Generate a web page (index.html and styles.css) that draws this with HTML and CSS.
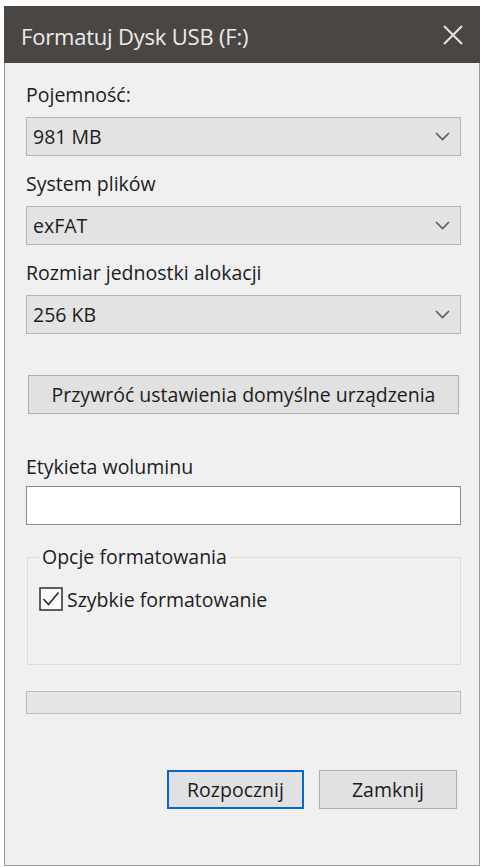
FILE: index.html
```html
<!DOCTYPE html>
<html lang="pl">
<head>
<meta charset="utf-8">
<title>Formatuj Dysk USB (F:)</title>
<link rel="stylesheet" href="styles.css">
</head>
<body>
<div class="window">
  <div class="titlebar">
    <span class="title">Formatuj Dysk USB (F:)</span>
    <svg class="close" width="20" height="20" viewBox="0 0 20 20"><path d="M1 1 L19 19 M19 1 L1 19" stroke="#e6e6e6" stroke-width="2" fill="none"/></svg>
  </div>
  <div class="content">
    <div class="label first">Pojemność:</div>
    <div class="combo"><span>981 MB</span><svg class="chev" width="15" height="9" viewBox="0 0 15 9"><polyline points="1,1 7.5,7.5 14,1" stroke="#5a5a5a" stroke-width="1.6" fill="none"/></svg></div>
    <div class="label">System plików</div>
    <div class="combo"><span>exFAT</span><svg class="chev" width="15" height="9" viewBox="0 0 15 9"><polyline points="1,1 7.5,7.5 14,1" stroke="#5a5a5a" stroke-width="1.6" fill="none"/></svg></div>
    <div class="label">Rozmiar jednostki alokacji</div>
    <div class="combo"><span>256 KB</span><svg class="chev" width="15" height="9" viewBox="0 0 15 9"><polyline points="1,1 7.5,7.5 14,1" stroke="#5a5a5a" stroke-width="1.6" fill="none"/></svg></div>
    <button class="btn restore">Przywróć ustawienia domyślne urządzenia</button>
    <div class="label vol">Etykieta woluminu</div>
    <div class="textbox"></div>
    <fieldset class="group">
      <legend>Opcje formatowania</legend>
      <div class="check">
        <svg class="box" width="24" height="24" viewBox="0 0 24 24"><rect x="1" y="1" width="22" height="22" fill="#fafafa" stroke="#3a3a3a" stroke-width="1.6"/><polyline points="4.5,12 9.5,17.5 19.5,5.5" stroke="#2a2a2a" stroke-width="1.6" fill="none"/></svg>
        <span>Szybkie formatowanie</span>
      </div>
    </fieldset>
    <div class="progress"></div>
    <div class="actions">
      <button class="btn action primary">Rozpocznij</button>
      <button class="btn action">Zamknij</button>
    </div>
  </div>
</div>
</body>
</html>
```
FILE: styles.css
```css
html, body {
  margin: 0;
  padding: 0;
  background: #ffffff;
}
body {
  font-family: "Open Sans", "Noto Sans", "DejaVu Sans", sans-serif;
  color: #1c1c1c;
}
.window {
  margin: 6px 0 0 4px;
  width: 476px;
  height: 860px;
  box-sizing: border-box;
  border: 1px solid #9a9a9a;
  border-top: none;
  background: #f0f0f0;
  display: flex;
  flex-direction: column;
}
.titlebar {
  height: 57px;
  margin: 0 -1px;
  background: #4a4643;
  display: flex;
  align-items: center;
  justify-content: space-between;
  padding: 0 17px 0 17px;
  box-sizing: border-box;
  flex: none;
}
.title {
  color: #ececec;
  font-size: 22px;
  line-height: 28px;
  margin-top: 3px;
  letter-spacing: -0.2px;
}
.close {
  display: block;
}
.content {
  padding: 0 18px 0 21px;
  display: flex;
  flex-direction: column;
  font-size: 19.5px;
}
.label {
  line-height: 22px;
  margin-top: 17px;
  margin-bottom: 11px;
}
.label.first {
  margin-top: 21px;
}
.combo {
  height: 39px;
  box-sizing: border-box;
  border: 1px solid #b4b4b4;
  background: #e3e3e3;
  display: flex;
  align-items: center;
  justify-content: space-between;
  padding: 0 10px 0 6px;
}
.chev {
  display: block;
}
.btn {
  font-family: inherit;
  font-size: 19.5px;
  color: #1c1c1c;
  background: #e1e1e1;
  border: 1px solid #adadad;
  box-sizing: border-box;
  padding: 0;
}
.restore {
  margin: 41px 2px 0 2px;
  height: 39px;
}
.label.vol {
  margin-top: 42px;
  margin-bottom: 8px;
}
.textbox {
  height: 39px;
  box-sizing: border-box;
  border: 1px solid #8a8a8a;
  background: #ffffff;
}
.group {
  margin: 21px 0 0 1px;
  padding: 19px 11px 53px 11px;
  border: 1px solid #dcdcdc;
  min-width: 0;
}
.group legend {
  padding: 0 3px;
  line-height: 22px;
  font-size: 19.5px;
}
.check {
  display: flex;
  align-items: center;
  height: 24px;
  gap: 4px;
}
.check .box {
  display: block;
  flex: none;
}
.progress {
  margin-top: 26px;
  height: 23px;
  box-sizing: border-box;
  border: 1px solid #bcbcbc;
  background: #e6e6e6;
}
.actions {
  margin-top: 56px;
  display: flex;
  justify-content: flex-end;
  gap: 15px;
  padding-right: 4px;
}
.action {
  height: 39px;
  width: 138px;
}
.action.primary {
  width: 137px;
  border: 2px solid #0a67c4;
  box-shadow: inset 0 0 0 1px #cfe3f5;
}
```
